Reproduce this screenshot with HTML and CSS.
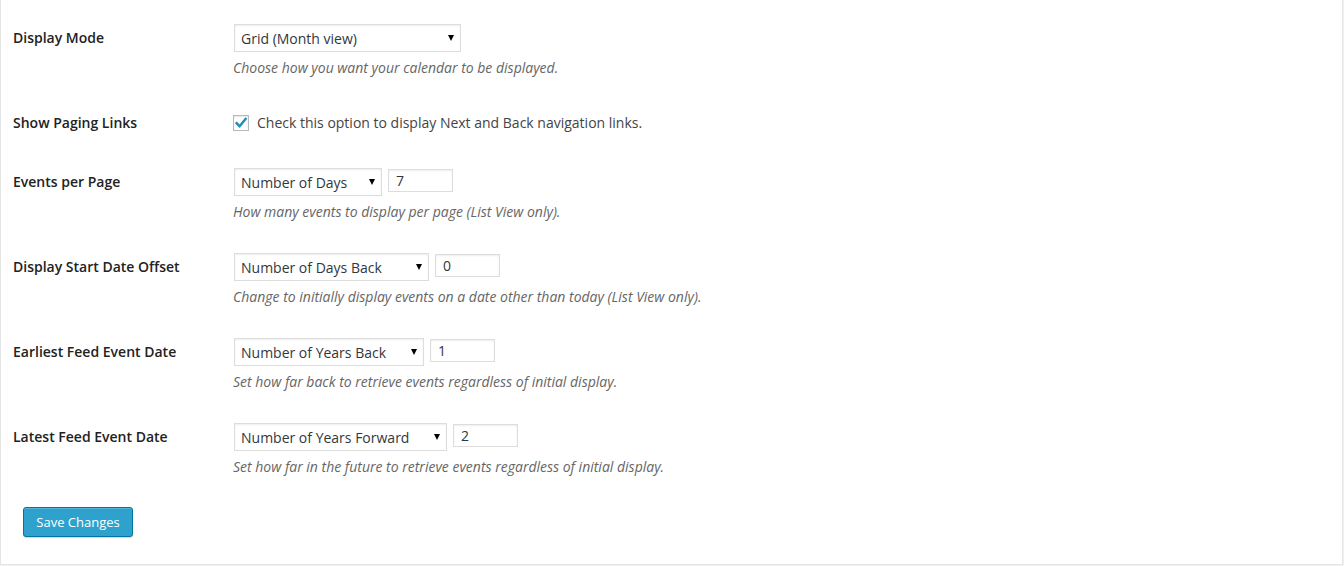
FILE: index.html
```html
<!DOCTYPE html>
<html lang="en">
<head>
<meta charset="utf-8">
<title>Calendar Settings</title>
<link rel="stylesheet" href="styles.css">
</head>
<body>
<div class="panel">
  <div class="row">
    <div class="label">Display Mode</div>
    <div class="field">
      <div class="controls">
        <span class="select w-mode"><select><option>Grid (Month view)</option></select></span>
      </div>
      <p class="desc">Choose how you want your calendar to be displayed.</p>
    </div>
  </div>

  <div class="row check-row">
    <div class="label">Show Paging Links</div>
    <div class="field">
      <label class="check">
        <span class="checkbox"><svg viewBox="0 0 16 16" width="16" height="16"><path d="M3.6 8.2 L6.6 11.2 L12.6 4" fill="none" stroke="#1e8cbe" stroke-width="2.4" stroke-linecap="square"/></svg></span>
        <span>Check this option to display Next and Back navigation links.</span>
      </label>
    </div>
  </div>

  <div class="row">
    <div class="label">Events per Page</div>
    <div class="field">
      <div class="controls">
        <span class="select w-days"><select><option>Number of Days</option></select></span>
        <input class="num" type="text" value="7">
      </div>
      <p class="desc">How many events to display per page (List View only).</p>
    </div>
  </div>

  <div class="row">
    <div class="label">Display Start Date Offset</div>
    <div class="field">
      <div class="controls">
        <span class="select w-daysback"><select><option>Number of Days Back</option></select></span>
        <input class="num" type="text" value="0">
      </div>
      <p class="desc">Change to initially display events on a date other than today (List View only).</p>
    </div>
  </div>

  <div class="row">
    <div class="label">Earliest Feed Event Date</div>
    <div class="field">
      <div class="controls">
        <span class="select w-yearsback"><select><option>Number of Years Back</option></select></span>
        <input class="num" type="text" value="1">
      </div>
      <p class="desc">Set how far back to retrieve events regardless of initial display.</p>
    </div>
  </div>

  <div class="row">
    <div class="label">Latest Feed Event Date</div>
    <div class="field">
      <div class="controls">
        <span class="select w-yearsfwd"><select><option>Number of Years Forward</option></select></span>
        <input class="num" type="text" value="2">
      </div>
      <p class="desc">Set how far in the future to retrieve events regardless of initial display.</p>
    </div>
  </div>

  <div class="submit">
    <button class="button-primary" type="button">Save Changes</button>
  </div>
</div>
</body>
</html>
```

FILE: styles.css
```css
html, body {
  margin: 0;
  padding: 0;
}

body {
  background: #f1f1f1;
  font-family: "Open Sans", "Noto Sans", sans-serif;
  font-size: 13px;
  color: #444;
}

.panel {
  width: 1343px;
  box-sizing: border-box;
  background: #fff;
  border: 1px solid #e5e5e5;
  border-top: 0;
  padding: 8px 12px 27px;
}

.row {
  display: flex;
  padding: 16px 0;
}

.label {
  width: 221px;
  flex: none;
  font-size: 14px;
  font-weight: 600;
  color: #222;
  line-height: 28px;
}

.field {
  flex: 1;
}

.controls {
  display: flex;
  align-items: flex-start;
  gap: 6px;
}

.select {
  position: relative;
  display: block;
  height: 28px;
}

.select select {
  -webkit-appearance: none;
  appearance: none;
  box-sizing: border-box;
  width: 100%;
  height: 28px;
  margin: 0;
  padding: 0 20px 0 6px;
  border: 1px solid #ddd;
  border-radius: 0;
  background: #fff;
  box-shadow: inset 0 1px 2px rgba(0, 0, 0, 0.07);
  font-family: "Open Sans", "Noto Sans", sans-serif;
  font-size: 14px;
  color: #32373c;
  outline: none;
}

.select::after {
  content: "";
  position: absolute;
  right: 7px;
  top: 11px;
  width: 0;
  height: 0;
  border-style: solid;
  border-width: 6px 3.5px 0 3.5px;
  border-color: #000 transparent transparent transparent;
  pointer-events: none;
}

.w-mode { width: 227px; }
.w-days { width: 148px; }
.w-daysback { width: 195px; }
.w-yearsback { width: 190px; }
.w-yearsfwd { width: 213px; }

.num {
  box-sizing: border-box;
  width: 65px;
  height: 23px;
  margin: 1px 0 0;
  padding: 0 7px;
  border: 1px solid #ddd;
  border-radius: 0;
  background: #fff;
  box-shadow: inset 0 1px 2px rgba(0, 0, 0, 0.07);
  font-family: "Open Sans", "Noto Sans", sans-serif;
  font-size: 14px;
  color: #32373c;
  outline: none;
}

.desc {
  margin: 7px 0 0 -1px;
  font-size: 14px;
  font-style: italic;
  line-height: 18px;
  color: #666;
}

.check-row .label {
  line-height: 27px;
}

.check {
  display: flex;
  align-items: center;
  height: 27px;
  gap: 8px;
  margin-left: -1px;
  font-size: 14px;
  color: #444;
}

.checkbox {
  display: block;
  box-sizing: border-box;
  width: 16px;
  height: 16px;
  border: 1px solid #b4b9be;
  background: #fff;
  box-shadow: inset 0 1px 2px rgba(0, 0, 0, 0.1);
  position: relative;
}

.checkbox svg {
  position: absolute;
  left: -1px;
  top: -1px;
}

.submit {
  padding: 15px 0 0 10px;
}

.button-primary {
  display: block;
  box-sizing: border-box;
  width: 110px;
  height: 30px;
  margin: 0;
  padding: 0 0 1px;
  border: 1px solid #0074a2;
  border-radius: 3px;
  background: #2ea2cc;
  box-shadow: inset 0 1px 0 rgba(120, 200, 230, 0.5), 0 1px 0 rgba(0, 0, 0, 0.15);
  font-family: "Open Sans", "Noto Sans", sans-serif;
  font-size: 13px;
  line-height: 28px;
  color: #fff;
  text-align: center;
  cursor: pointer;
}
```
